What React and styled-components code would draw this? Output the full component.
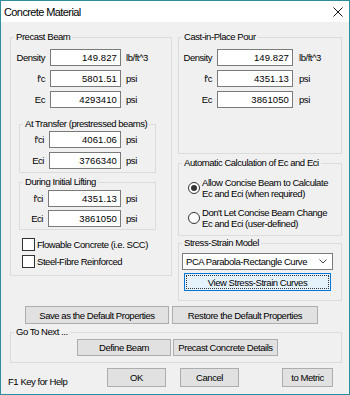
import React from "react";
import styled, { createGlobalStyle } from "styled-components";

const GlobalStyle = createGlobalStyle`
  html, body {
    margin: 0;
    padding: 0;
    background: #ffffff;
  }
  body {
    font-family: "Liberation Sans", Arial, sans-serif;
    font-size: 9.5px;
    letter-spacing: -0.45px;
    color: #000;
    white-space: nowrap;
  }
`;

const Window = styled.div`
  width: 350px;
  height: 395px;
  box-sizing: border-box;
  border: 1px solid #2f8e9c;
  background: #f0f0f0;
  display: flex;
  flex-direction: column;
  overflow: hidden;
`;

const TitleBar = styled.div`
  height: 21px;
  flex-shrink: 0;
  background: #ffffff;
  display: flex;
  align-items: center;
  justify-content: space-between;
  padding: 0 6px 0 3px;
  font-size: 11px;
  letter-spacing: -0.6px;
`;

const Body = styled.div`
  padding: 9px 7px 0 9px;
  display: flex;
  flex-direction: column;
`;

const Columns = styled.div`
  display: flex;
  gap: 6px;
  align-items: flex-start;
`;

const Column = styled.div`
  width: ${({ $w }) => $w}px;
  display: flex;
  flex-direction: column;
`;

const Group = styled.fieldset`
  margin: ${({ $m }) => $m || "0"};
  padding: ${({ $pad }) => $pad || "0"};
  width: ${({ $w }) => ($w ? `${$w}px` : "auto")};
  box-sizing: border-box;
  min-width: 0;
  border: 1px solid #dcdcdc;
`;

const Legend = styled.legend`
  margin-left: 3px;
  padding: 0 2px;
  line-height: 12px;
  height: 12px;
`;

const Rows = styled.div`
  display: flex;
  flex-direction: column;
  gap: ${({ $gap }) => $gap}px;
`;

const FieldRow = styled.div`
  display: grid;
  grid-template-columns: ${({ $label }) => $label}px ${({ $input }) => $input}px auto;
  column-gap: 5px;
  align-items: center;
  height: 17px;
`;

const FieldLabel = styled.span`
  text-align: right;
`;

const NumBox = styled.div`
  height: 17px;
  box-sizing: border-box;
  background: #fff;
  border: 1px solid #7a7a7a;
  text-align: right;
  padding-right: 3px;
  line-height: 15px;
  letter-spacing: 0.1px;
`;

const Unit = styled.span`
  padding-left: ${({ $pad }) => $pad || 0}px;
`;

const Checks = styled.div`
  margin-top: 8px;
  padding-left: 11px;
  display: flex;
  flex-direction: column;
  gap: 4px;
`;

const CheckRow = styled.div`
  display: flex;
  align-items: center;
  gap: 2px;
  height: 13px;
`;

const Box = styled.span`
  width: 13px;
  height: 13px;
  box-sizing: border-box;
  background: #fff;
  border: 1px solid #333;
`;

const RadioList = styled.div`
  padding: 8px 0 6px 9px;
  display: flex;
  flex-direction: column;
  gap: 8px;
`;

const RadioRow = styled.div`
  display: flex;
  align-items: center;
  gap: 2px;
  line-height: 11px;
`;

const Circle = styled.span`
  width: 12px;
  height: 12px;
  flex-shrink: 0;
  box-sizing: border-box;
  border-radius: 50%;
  border: 1px solid #333;
  background: #fff;
  display: flex;
  align-items: center;
  justify-content: center;

  &::after {
    content: "";
    width: 6px;
    height: 6px;
    border-radius: 50%;
    background: ${({ $on }) => ($on ? "#333" : "transparent")};
  }
`;

const Combo = styled.div`
  margin-left: 3px;
  width: 151px;
  height: 17px;
  box-sizing: border-box;
  background: #fff;
  border: 1px solid #7a7a7a;
  display: flex;
  align-items: center;
  justify-content: space-between;
  padding: 0 5px 0 3px;
`;

const Button = styled.div`
  width: ${({ $w }) => $w}px;
  height: ${({ $h }) => $h || 18}px;
  margin-left: ${({ $ml }) => $ml || 0}px;
  margin-top: ${({ $mt }) => $mt || 0}px;
  box-sizing: border-box;
  background: #e1e1e1;
  border: 1px solid #adadad;
  display: flex;
  align-items: center;
  justify-content: center;
  flex-shrink: 0;
`;

const FocusButton = styled(Button)`
  background: #e5f1fb;
  border-color: #0078d7;
  padding: 1px;

  span {
    flex: 1;
    align-self: stretch;
    display: flex;
    align-items: center;
    justify-content: center;
    border: 1px dotted #333;
  }
`;

const ButtonRow = styled.div`
  display: flex;
  align-items: center;
  gap: ${({ $gap }) => $gap || 0}px;
  margin-top: ${({ $mt }) => $mt || 0}px;
  padding-left: ${({ $pl }) => $pl || 0}px;
`;

const HelpText = styled.span`
  width: 99px;
  margin-left: -2px;
  padding-top: 8px;
  flex-shrink: 0;
`;

const Field = ({ label, value, unit, labelW, inputW, unitPad }) => (
  <FieldRow $label={labelW} $input={inputW}>
    <FieldLabel>{label}</FieldLabel>
    <NumBox>{value}</NumBox>
    <Unit $pad={unitPad}>{unit}</Unit>
  </FieldRow>
);

const CloseIcon = () => (
  <svg width="10" height="10" viewBox="0 0 10 10">
    <path d="M0.5 0.5 L9.5 9.5 M9.5 0.5 L0.5 9.5" stroke="#111" strokeWidth="1" />
  </svg>
);

const Chevron = () => (
  <svg width="8" height="5" viewBox="0 0 8 5">
    <path d="M0.5 0.5 L4 4 L7.5 0.5" stroke="#444" strokeWidth="1" fill="none" />
  </svg>
);

export default function App() {
  return (
    <>
      <GlobalStyle />
      <Window>
        <TitleBar>
          <span>Concrete Material</span>
          <CloseIcon />
        </TitleBar>
        <Body>
          <Columns>
            <Column $w={162}>
              <Group $pad="6px 0 7px 0">
                <Legend>Precast Beam</Legend>
                <Rows $gap={4}>
                  <Field label="Density" value="149.827" unit="lb/ft^3" labelW={34} inputW={71} />
                  <Field label="f'c" value="5801.51" unit="psi" labelW={34} inputW={71} />
                  <Field label="Ec" value="4293410" unit="psi" labelW={34} inputW={71} />
                </Rows>
                <Group $m="10px 0 0 8px" $w={137} $pad="1px 0 3px 0">
                  <Legend>At Transfer (prestressed beams)</Legend>
                  <Rows $gap={4}>
                    <Field label="f'ci" value="4061.06" unit="psi" labelW={24} inputW={72} />
                    <Field label="Eci" value="3766340" unit="psi" labelW={24} inputW={72} />
                  </Rows>
                </Group>
                <Group $m="3px 0 0 8px" $w={137} $pad="2px 0 2px 0">
                  <Legend>During Initial Lifting</Legend>
                  <Rows $gap={3}>
                    <Field label="f'ci" value="4351.13" unit="psi" labelW={23} inputW={73} />
                    <Field label="Eci" value="3861050" unit="psi" labelW={23} inputW={73} />
                  </Rows>
                </Group>
                <Checks>
                  <CheckRow>
                    <Box />
                    Flowable Concrete (i.e. SCC)
                  </CheckRow>
                  <CheckRow>
                    <Box />
                    Steel-Fibre Reinforced
                  </CheckRow>
                </Checks>
              </Group>
            </Column>

            <Column $w={164}>
              <Group $pad="6px 0 45px 0">
                <Legend>Cast-in-Place Pour</Legend>
                <Rows $gap={4}>
                  <Field label="Density" value="149.827" unit="lb/ft^3" labelW={33} inputW={76} unitPad={1} />
                  <Field label="f'c" value="4351.13" unit="psi" labelW={33} inputW={76} unitPad={1} />
                  <Field label="Ec" value="3861050" unit="psi" labelW={33} inputW={76} unitPad={1} />
                </Rows>
              </Group>
              <Group $m="3px 0 0 0">
                <Legend>Automatic Calculation of Ec and Eci</Legend>
                <RadioList>
                  <RadioRow>
                    <Circle $on />
                    <span>
                      Allow Concise Beam to Calculate
                      <br />
                      Ec and Eci (when required)
                    </span>
                  </RadioRow>
                  <RadioRow>
                    <Circle />
                    <span>
                      Don't Let Concise Beam Change
                      <br />
                      Ec and Eci (user-defined)
                    </span>
                  </RadioRow>
                </RadioList>
              </Group>
              <Group $m="1px 0 0 0" $pad="4px 0 9px 0">
                <Legend>Stress-Strain Model</Legend>
                <Combo>
                  <span>PCA Parabola-Rectangle Curve</span>
                  <Chevron />
                </Combo>
                <FocusButton $w={147} $ml={5} $mt={3}>
                  <span>View Stress-Strain Curves</span>
                </FocusButton>
              </Group>
            </Column>
          </Columns>

          <ButtonRow $mt={5} $pl={15} $gap={3}>
            <Button $w={144}>Save as the Default Properties</Button>
            <Button $w={146}>Restore the Default Properties</Button>
          </ButtonRow>

          <Group $m="2px 0 0 0" $pad="1px 0 6px 0">
            <Legend>Go To Next ...</Legend>
            <ButtonRow $pl={66} $gap={2}>
              <Button $w={94} $h={17}>Define Beam</Button>
              <Button $w={105} $h={17}>Precast Concrete Details</Button>
            </ButtonRow>
          </Group>

          <ButtonRow $mt={5}>
            <HelpText>F1 Key for Help</HelpText>
            <Button $w={59} $h={19}>OK</Button>
            <Button $w={59} $h={19} $ml={14}>Cancel</Button>
            <Button $w={51} $h={19} $ml={43}>to Metric</Button>
          </ButtonRow>
        </Body>
      </Window>
    </>
  );
}
